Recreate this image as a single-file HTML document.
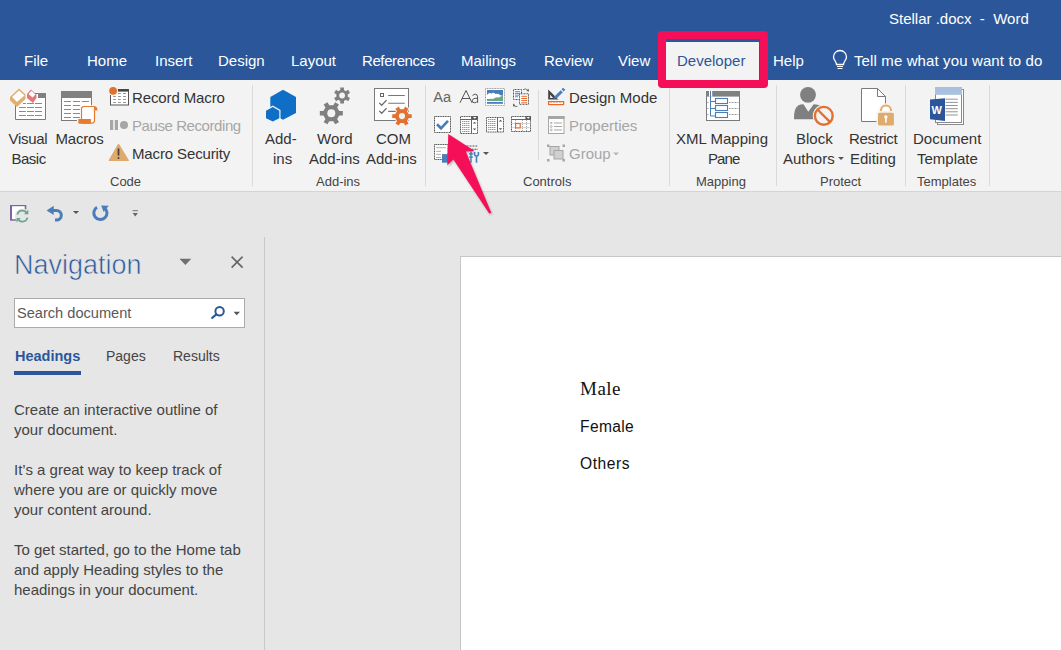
<!DOCTYPE html>
<html><head><meta charset="utf-8">
<style>
*{margin:0;padding:0;box-sizing:border-box}
html,body{width:1061px;height:650px;overflow:hidden;background:#e6e6e6;font-family:"Liberation Sans",sans-serif;position:relative}
.a{position:absolute;white-space:nowrap}
svg.a{overflow:visible}
#title{left:0;top:0;width:1061px;height:80px;background:#2b579a}
.tab{color:#fff;font-size:15px;top:52px}
#ribbon{left:0;top:80px;width:1061px;height:112px;background:#f3f3f3;border-bottom:1px solid #d4d4d4}
.rt{color:#333;font-size:15px}
.gl{color:#444;font-size:13px;top:174px}
.sep{width:1px;background:#dadada;top:85px;height:101px}
.dis{color:#a6a6a6}
#nav{left:0;top:237px;width:265px;height:413px;border-right:1px solid #c8c8c8}
.nt{color:#444;font-size:15px}
#page{left:460px;top:256px;width:601px;height:394px;background:#fff;border-left:1px solid #c6c6c6;border-top:1px solid #c6c6c6}
</style></head><body>
<div id="title" class="a"></div>
<div class="a" style="left:889px;top:10px;color:#fff;font-size:15px">Stellar .docx&nbsp; - &nbsp;Word</div>
<div class="a tab" style="left:24px">File</div>
<div class="a tab" style="left:87px">Home</div>
<div class="a tab" style="left:155px">Insert</div>
<div class="a tab" style="left:218px">Design</div>
<div class="a tab" style="left:291px">Layout</div>
<div class="a tab" style="left:362px;letter-spacing:-0.4px">References</div>
<div class="a tab" style="left:461px">Mailings</div>
<div class="a tab" style="left:544px">Review</div>
<div class="a tab" style="left:618px">View</div>
<div class="a" style="left:666px;top:42px;width:93px;height:39px;background:#f3f3f3"></div>
<div class="a tab" style="left:677px;color:#2b579a">Developer</div>
<div class="a tab" style="left:773px">Help</div>
<svg class="a" style="left:832px;top:51px" width="16" height="20" viewBox="0 0 16 20"><path d="M4.5 13.5 C4.5 10.5 1.5 9 1.5 6 A6.5 6.5 0 0 1 14.5 6 C14.5 9 11.5 10.5 11.5 13.5 Z" fill="none" stroke="#fff" stroke-width="1.3"/><path d="M5 15.5H11M5.5 17.5H10.5" stroke="#fff" stroke-width="1.2"/></svg>
<div class="a tab" style="left:854px;letter-spacing:0.12px">Tell me what you want to do</div>

<div id="ribbon" class="a"></div>
<!-- ===== Code group ===== -->
<svg class="a" style="left:0;top:80px" width="250" height="95" viewBox="0 80 250 95">
  <!-- Visual Basic -->
  <path d="M15.5 99 V119.5 H45.5 V93.5 H28" fill="#fff" stroke="#7a7a7a"/>
  <rect x="38" y="93" width="8" height="5" fill="#808080"/>
  <g stroke="#8a8a8a" stroke-width="1.1">
    <path d="M23 103.5H25.9M27 103.5H34M35 103.5H42M19 107.5H25.9M27 107.5H34M35 107.5H42M19 111.5H25.9M27 111.5H34M35 111.5H42M19 115.5H25.9M27 115.5H34M35 115.5H42"/>
  </g>
  <path d="M10 97 L19 88.5 L25.5 94.5 L25.5 99 L17 107 L10 100.5Z" fill="#e3ad6b"/>
  <path d="M12 97 L19 90.5 L24.5 95.5 L17 102Z" fill="#fff"/>
  <path d="M27 94 L31 89.5 L36.5 94.5 L36.5 98 L33 103 L27 98Z" fill="#e0787d"/>
  <path d="M28.5 94 L31.5 90.8 L35.5 94.5 L32.5 97.5Z" fill="#fff"/>
  <!-- Macros -->
  <rect x="61.5" y="91.5" width="30" height="29" fill="#fff" stroke="#7a7a7a"/>
  <rect x="61" y="91" width="31" height="7" fill="#808080"/>
  <g stroke="#8a8a8a" stroke-width="1.1">
    <path d="M63.9 101.5H71M72.9 101.5H80.1M81.8 101.5H89.1M63.9 105.5H71M72.9 105.5H80.1M63.9 109.5H71M72.9 109.5H80.1M63.9 113.5H71M72.9 113.5H80.1M63.9 117.5H71M72.9 117.5H80.1"/>
  </g>
  <path d="M80 105.2 H92.3 V121.3 H77 V118 H80Z" fill="#fff"/>
  <path d="M81.5 119 V108 L83 106.5 H94 Q96.8 106.8 96.8 109.8 H94.5 V121.5 L92.8 123.2 H82" fill="#fff" stroke="#e8792f" stroke-width="1.2"/>
  <path d="M94 106.4 Q97 106.8 97 109.8 H94Z" fill="#e8792f"/>
  <path d="M78.3 119 H90.9 V123.8 H79.5 Q78.3 123.8 78.3 122.5Z" fill="#e8792f"/>
  <!-- Record macro -->
  <rect x="110.5" y="89.5" width="18" height="15.5" fill="#fff" stroke="#555" stroke-width="1"/>
  <rect x="110.2" y="89.2" width="18.4" height="2.4" fill="#444"/>
  <g stroke="#8a8a8a" stroke-width="0.9"><path d="M113.1 96.5H115.9M118 96.5H120.9M123 96.5H126M113.1 99.5H115.9M118 99.5H120.9M123 99.5H126M113.1 102.5H115.9M118 102.5H120.9M123 102.5H126M118 93.5H120.9M123 93.5H126"/></g>
  <circle cx="113.1" cy="90.8" r="5" fill="#f3f3f3"/>
  <circle cx="113.1" cy="90.8" r="3.9" fill="#e3702d"/>
  <!-- Pause -->
  <rect x="110" y="120" width="3.2" height="10" fill="#a6a6a6"/>
  <rect x="114.8" y="120" width="3.2" height="10" fill="#a6a6a6"/>
  <circle cx="124" cy="125" r="4" fill="#a6a6a6"/>
  <!-- Warning -->
  <path d="M118.5 144 L128.5 160.5 L109 160.5Z" fill="#dfa96b" stroke="#dfa96b" stroke-linejoin="round"/>
  <path d="M118.5 148.5V155.5" stroke="#444" stroke-width="1.8"/><circle cx="118.5" cy="158" r="1" fill="#444"/>
</svg>
<div class="a rt" style="left:8.5px;top:130px;letter-spacing:-0.3px">Visual</div>
<div class="a rt" style="left:11.5px;top:150px;letter-spacing:-0.5px">Basic</div>
<div class="a rt" style="left:55.5px;top:130px;letter-spacing:-0.2px">Macros</div>
<div class="a rt" style="left:132px;top:89px;letter-spacing:-0.12px">Record Macro</div>
<div class="a rt dis" style="left:132px;top:117px;letter-spacing:-0.42px">Pause Recording</div>
<div class="a rt" style="left:132px;top:145px;letter-spacing:-0.13px">Macro Security</div>
<div class="a gl" style="left:110px">Code</div>
<div class="a sep" style="left:252px"></div>
<!-- ===== Add-ins ===== -->
<svg class="a" style="left:255px;top:80px" width="170" height="50" viewBox="255 80 170 50">
  <path d="M283 89.8 L296 97.1 L296 112.9 L283 119.7 L270.3 112.9 L270.3 97.1Z" fill="#0f6fc6"/>
  <path d="M272.8 105.5 L280.5 110 L280.5 119 L272.8 123 L264.8 119 L264.8 110Z" fill="#f3f3f3"/>
  <path d="M272.8 106.9 L279.3 110.7 L279.3 118.2 L272.8 121.5 L266 118.2 L266 110.7Z" fill="#0f6fc6"/>
  <!-- gears -->
  <path d="M339.20 111.10 L342.79 111.10 L342.79 115.50 L339.20 115.50 L337.15 119.04 L338.95 122.15 L335.14 124.35 L333.34 121.24 L329.26 121.24 L327.46 124.35 L323.65 122.15 L325.45 119.04 L323.40 115.50 L319.81 115.50 L319.81 111.10 L323.40 111.10 L325.45 107.56 L323.65 104.45 L327.46 102.25 L329.26 105.36 L333.34 105.36 L335.14 102.25 L338.95 104.45 L337.15 107.56 Z" fill="#7f7f7f"/>
  <path d="M343.95 101.00 L343.95 103.59 L340.25 103.59 L340.25 101.00 L338.26 99.85 L336.02 101.15 L334.17 97.94 L336.41 96.65 L336.41 94.35 L334.17 93.06 L336.02 89.85 L338.26 91.15 L340.25 90.00 L340.25 87.41 L343.95 87.41 L343.95 90.00 L345.94 91.15 L348.18 89.85 L350.03 93.06 L347.79 94.35 L347.79 96.65 L350.03 97.94 L348.18 101.15 L345.94 99.85 Z" fill="#7f7f7f"/>
  <circle cx="331.3" cy="113.3" r="4" fill="#f3f3f3"/>
  <circle cx="342.1" cy="95.5" r="2.9" fill="#f3f3f3"/>
  <!-- COM -->
  <rect x="374.5" y="88.5" width="34" height="32" fill="#fff" stroke="#7a7a7a"/>
  <rect x="380.5" y="93.5" width="3" height="3" fill="none" stroke="#666"/>
  <path d="M388.2 95.5H404.8M388.2 103.3H404.8M388.2 111.4H396" stroke="#777" stroke-width="1.1"/>
  <path d="M379.2 102.9 L381.7 105.3 L386.6 100.1M379.2 110.9 L381.7 113.3 L386.6 108.1" fill="none" stroke="#6a6a6a" stroke-width="1.3"/>
  <path d="M408.74 114.20 L411.72 114.20 L411.72 118.00 L408.74 118.00 L407.01 120.98 L408.50 123.56 L405.21 125.46 L403.72 122.88 L400.28 122.88 L398.79 125.46 L395.50 123.56 L396.99 120.98 L395.26 118.00 L392.28 118.00 L392.28 114.20 L395.26 114.20 L396.99 111.22 L395.50 108.64 L398.79 106.74 L400.28 109.32 L403.72 109.32 L405.21 106.74 L408.50 108.64 L407.01 111.22 Z" fill="#e3702d" stroke="#f3f3f3" stroke-width="2" paint-order="stroke"/>
  <circle cx="402" cy="116.1" r="3.1" fill="#f0f0f0"/>
</svg>
<div class="a rt" style="left:265px;top:130px">Add-</div>
<div class="a rt" style="left:273px;top:150px">ins</div>
<div class="a rt" style="left:317px;top:130px">Word</div>
<div class="a rt" style="left:309px;top:150px">Add-ins</div>
<div class="a rt" style="left:376px;top:130px">COM</div>
<div class="a rt" style="left:366px;top:150px">Add-ins</div>
<div class="a gl" style="left:316px">Add-ins</div>
<div class="a sep" style="left:425px"></div>
<!-- ===== Controls ===== -->
<svg class="a" style="left:428px;top:80px" width="145" height="90" viewBox="428 80 145 90">
  <text x="433.3" y="102.2" font-family="Liberation Sans" font-size="15.5" fill="#666" textLength="17.8" lengthAdjust="spacingAndGlyphs">Aa</text>
  <path d="M460 102.8 L466 90.5 L472 102.8 M462 98.5 H470" fill="none" stroke="#444" stroke-width="0.9"/>
  <path d="M472.5 95.5 Q474 94.2 475.3 94.2 Q477.6 94.2 477.6 96.8 V102.8 M477.6 98.3 Q472.3 98 472.3 100.7 Q472.3 102.8 474.6 102.8 Q476.6 102.8 477.6 101" fill="none" stroke="#444" stroke-width="0.9"/>
  <!-- picture -->
  <rect x="485.5" y="88.5" width="19" height="17" fill="#fff" stroke="#999" stroke-dasharray="1 0.6"/>
  <rect x="487" y="90" width="16" height="11" fill="#4a7ebb"/>
  <path d="M487 95 Q489 92 491.5 93.5 Q493.5 92 495.5 94 Q498 93 500 95 Q502 96 503 95.5 V98 Q499 98.5 496 99 Q492 99.5 487 99Z" fill="#fff"/>
  <path d="M487 100 Q490 98 493 99 Q496 96.5 499 97.5 Q501 95.5 503 96 V101 H487Z" fill="#6aa58c"/>
  <rect x="487" y="102" width="16" height="1.8" fill="#4a7ebb"/>
  <!-- building block -->
  <rect x="513.5" y="89.5" width="8" height="10" fill="#fff" stroke="#555" stroke-dasharray="1 0.5"/>
  <path d="M515 91.7H520M515 93.4H520M515 95.1H520M515 96.8H518" stroke="#4a7ebb" stroke-width="0.9"/>
  <rect x="519.5" y="93.8" width="9" height="10.5" fill="#fff" stroke="#555" stroke-dasharray="1 0.5"/>
  <path d="M521.3 96.3H527.1M521.3 98.5H527.1M521.3 100.6H527.1M521.3 102.8H527.1" stroke="#e46c2a" stroke-width="1"/>
  <path d="M523 89.7 Q526 87.8 528.3 90.5M514 105.6 Q515 107 517.5 106.4" fill="none" stroke="#555" stroke-width="0.8"/>
  <path d="M528.8 88.8 L528.8 91.5 L526.5 91Z M513.2 103.5 L513 106.5 L515.5 105.5Z" fill="#555"/>
  <!-- checkbox -->
  <rect x="434.5" y="116.5" width="16" height="16" fill="#fff" stroke="#555" stroke-dasharray="1.2 0.5"/>
  <path d="M437 124.3 L441 128.3 L448 120.8" fill="none" stroke="#4a7ebb" stroke-width="2.7"/>
  <!-- combo -->
  <rect x="460.5" y="116.5" width="17" height="17" fill="#fff" stroke="#555" stroke-dasharray="1.2 0.5"/>
  <path d="M460.5 119.5H477.5M471.5 117V133.5" stroke="#666" stroke-width="1"/>
  <rect x="471.6" y="116.2" width="6.4" height="3.2" fill="#555"/>
  <path d="M473 117 L476.6 117 L474.8 118.8Z" fill="#fff"/>
  <path d="M462 121.5H470M462 123.5H470M462 125.5H470M462 127.5H470M462 129.5H470M462 131.5H470" stroke="#999" stroke-width="1" stroke-dasharray="1.5 0.5"/>
  <path d="M472.8 123.5 L476.3 123.5 L474.55 121.7Z M472.8 128.5 L476.3 128.5 L474.55 130.3Z" fill="#555"/>
  <!-- list -->
  <rect x="486.5" y="117.5" width="17" height="14.5" fill="#fff" stroke="#555" stroke-dasharray="1.2 0.5"/>
  <path d="M497.5 118V132" stroke="#666"/>
  <path d="M488 119.5H496M488 121.5H496M488 123.5H496M488 125.5H496M488 127.5H496M488 129.5H496" stroke="#999" stroke-width="1" stroke-dasharray="1.5 0.5"/>
  <path d="M498.7 121.5 L502.3 121.5 L500.5 119.7Z M498.7 128.3 L502.3 128.3 L500.5 130.1Z" fill="#555"/>
  <!-- date -->
  <rect x="511.5" y="116.5" width="19" height="15" fill="#fff" stroke="#555" stroke-dasharray="1.2 0.5"/>
  <path d="M511.5 119.5H531" stroke="#666" stroke-width="1"/>
  <path d="M511.5 123.5H530.5M511.5 127.5H530.5M515.5 120V131.5M522.5 120V131.5M526.5 120V131.5" stroke="#aaa" stroke-width="1" stroke-dasharray="1 1"/>
  <rect x="525.4" y="116.2" width="5.6" height="3.2" fill="#555"/>
  <path d="M526.5 117 L530 117 L528.25 118.8Z" fill="#fff"/>
  <rect x="515.6" y="123.5" width="4.6" height="4.4" fill="#fff" stroke="#e46c2a" stroke-width="1.2"/>
  <!-- legacy tools -->
  <rect x="434.5" y="144.5" width="13.5" height="15" fill="#fff" stroke="#555" stroke-dasharray="1.2 0.5"/>
  <path d="M436.1 147.7H446M436.1 151.3H441M436.1 154.4H441M436.1 157.5H441" stroke="#999" stroke-width="0.8"/>
  <rect x="442" y="154.1" width="6.4" height="8.6" fill="#4a7ebb"/>
  <path d="M465.5 146H477.8M466 149.3H478" stroke="#555" stroke-width="1.1" stroke-dasharray="1 0.5"/>
  <path d="M471 151.5V162.7M469.2 154H472.9M469.2 157H472.9" stroke="#4a7ebb" stroke-width="1.4"/>
  <path d="M476.5 155.5V162.7M474.6 152 V154.3 Q474.6 156 476.5 156 Q478.4 156 478.4 154.3 V152" fill="none" stroke="#4a7ebb" stroke-width="1.6"/>
  <path d="M483 152 L489 152 L486 155Z" fill="#555"/>
  <!-- Design mode -->
  <path d="M548.2 89.4 V99.5 H558.5Z" fill="#444"/>
  <path d="M550.1 94.5 V97.9 H553.1Z" fill="#f3f3f3"/>
  <path d="M556 97.2 L563 90.2" stroke="#f3f3f3" stroke-width="4.5"/>
  <path d="M555.5 97.5 L561.8 91.2" stroke="#4a7ebb" stroke-width="3"/>
  <path d="M562.6 90.4 L564.2 88.8" stroke="#4a7ebb" stroke-width="3"/>
  <path d="M553.8 98.8 L554.6 96.2 L556.4 98Z" fill="#4a7ebb"/>
  <rect x="548.6" y="101.6" width="15" height="3" fill="#fff" stroke="#e46c2a" stroke-width="1.2"/>
  <path d="M551 102V102.8M554 102V102.8M557 102V102.8M560 102V102.8" stroke="#e46c2a" stroke-width="0.8"/>
  <path d="M538.5 90V160" stroke="#dadada"/>
  <!-- Properties -->
  <rect x="548.5" y="116.5" width="15.5" height="17" fill="#fff" stroke="#a6a6a6"/>
  <rect x="548" y="116" width="16.5" height="3" fill="#a6a6a6"/>
  <path d="M554 123H562M554 126.5H562M554 130H562" stroke="#a6a6a6" stroke-width="1.1"/>
  <circle cx="551.2" cy="126.5" r="1" fill="none" stroke="#a6a6a6" stroke-width="0.8"/><circle cx="551.2" cy="130" r="1" fill="none" stroke="#a6a6a6" stroke-width="0.8"/>
  <path d="M550 123H552.5M551.2 121.8V124.2" stroke="#a6a6a6" stroke-width="0.8"/>
  <!-- Group -->
  <rect x="550" y="146.5" width="9" height="8.5" fill="#d0d0d0" stroke="#a6a6a6"/>
  <rect x="554" y="150.5" width="9" height="8.5" fill="#d0d0d0" stroke="#a6a6a6"/>
  <rect x="547" y="144.5" width="2.5" height="2.5" fill="#a6a6a6"/><rect x="562.5" y="144.5" width="2.5" height="2.5" fill="#a6a6a6"/>
  <rect x="547" y="159" width="2.5" height="2.5" fill="#a6a6a6"/><rect x="562.5" y="159" width="2.5" height="2.5" fill="#a6a6a6"/>
  <path d="M613 152.5 L619 152.5 L616 155.5Z" fill="#b5b5b5"/>
</svg>
<div class="a rt" style="left:569px;top:89px">Design Mode</div>
<div class="a rt dis" style="left:569px;top:117px">Properties</div>
<div class="a rt dis" style="left:569px;top:145px">Group</div>
<div class="a gl" style="left:523px">Controls</div>
<div class="a sep" style="left:669px"></div>
<!-- ===== Mapping ===== -->
<svg class="a" style="left:700px;top:85px" width="50" height="40" viewBox="700 85 50 40">
  <rect x="706.5" y="91.5" width="33" height="29" fill="#fff" stroke="#7a7a7a"/>
  <rect x="706" y="91" width="34" height="5.6" fill="#808080"/>
  <rect x="709" y="91" width="3.2" height="5.6" fill="#fff"/>
  <path d="M710.5 91V116H715.5M710.5 101.5H715.5M710.5 108.5H715.5" fill="none" stroke="#4a7ebb" stroke-width="1"/>
  <rect x="715.5" y="98.5" width="12" height="5" fill="#fff" stroke="#4a7ebb" stroke-width="1.1"/>
  <rect x="715.5" y="105.5" width="12" height="5" fill="#fff" stroke="#4a7ebb" stroke-width="1.1"/>
  <rect x="715.5" y="112.5" width="12" height="5" fill="#fff" stroke="#4a7ebb" stroke-width="1.1"/>
  <path d="M729 102.5H738.5M729 108.5H738.5M729 114.5H738.5M706.8 102.5H708.8M706.8 108.5H708.8M706.8 114.5H708.8" stroke="#999" stroke-dasharray="1 0.5" stroke-width="1"/>
</svg>
<div class="a rt" style="left:676px;top:130px">XML Mapping</div>
<div class="a rt" style="left:708px;top:150px;letter-spacing:-0.9px">Pane</div>
<div class="a gl" style="left:696px">Mapping</div>
<div class="a sep" style="left:776px"></div>
<!-- ===== Protect ===== -->
<svg class="a" style="left:785px;top:84px" width="120" height="45" viewBox="785 84 120 45">
  <circle cx="808" cy="94.8" r="7.9" fill="#808080"/>
  <path d="M794 119.2 Q793.6 108 798.5 105.3 Q800.5 104.3 803.5 104.3 L808.3 111.7 L813.7 104.3 Q818 104.3 821 106 L822 119.2Z" fill="#808080"/>
  <circle cx="823.8" cy="115.8" r="11" fill="#f3f3f3"/>
  <circle cx="823.8" cy="115.8" r="8.9" fill="#f3f3f3" stroke="#e3702d" stroke-width="2.4"/>
  <path d="M817.5 109.5 L830.1 122.1" stroke="#e3702d" stroke-width="2.4"/>
  <!-- Restrict -->
  <path d="M885.5 104 V96.5 L877.5 88.5 H861.5 V121.5 H877" fill="#fff" stroke="#7a7a7a"/>
  <path d="M877.5 88.5 V96.5 H885.5" fill="none" stroke="#7a7a7a"/>
  <path d="M881 113 V110.5 A5 5 0 0 1 891 110.5 V113" fill="#fff" stroke="#f3f3f3" stroke-width="4.5"/>
  <path d="M881 113 V110.5 A5 5 0 0 1 891 110.5 V113" fill="#fff" stroke="#e0ac6e" stroke-width="2"/>
  <rect x="876.5" y="111" width="19" height="16" rx="2" fill="#f3f3f3"/>
  <rect x="878" y="112.8" width="15.9" height="12.8" rx="1.5" fill="#e0ac6e"/>
  <circle cx="885.9" cy="117" r="1.7" fill="#fff"/><rect x="885.1" y="117" width="1.6" height="5.6" fill="#fff"/>
</svg>
<div class="a rt" style="left:796px;top:130px">Block</div>
<div class="a rt" style="left:783px;top:150px">Authors</div>
<svg class="a" style="left:837px;top:156px" width="8" height="5"><path d="M1 1H7L4 4Z" fill="#555"/></svg>
<div class="a rt" style="left:849px;top:130px;letter-spacing:-0.3px">Restrict</div>
<div class="a rt" style="left:850px;top:150px">Editing</div>
<div class="a gl" style="left:820px">Protect</div>
<div class="a sep" style="left:905px"></div>
<!-- ===== Templates ===== -->
<svg class="a" style="left:925px;top:84px" width="45" height="45" viewBox="925 84 45 45">
  <rect x="937.5" y="89.5" width="26" height="35" fill="#fff" stroke="#8a8a8a"/>
  <rect x="935.5" y="87.5" width="26" height="35" fill="#fff" stroke="#8a8a8a"/>
  <rect x="935" y="87" width="27" height="7.8" fill="#a9c0de"/>
  <path d="M945.5 99.2H957.8M945.5 102.4H957.8M945.5 105.5H957.8M945.5 108.7H957.8M945.5 111.8H957.8M945.5 115H957.8" stroke="#888" stroke-width="0.9"/>
  <path d="M930 99.6 L945 98.2 V120.9 L930 119.3Z" fill="#2b579a"/>
  <text x="931.5" y="114" font-family="Liberation Sans" font-weight="bold" font-size="11" fill="#fff">W</text>
</svg>
<div class="a rt" style="left:913px;top:130px">Document</div>
<div class="a rt" style="left:917px;top:150px">Template</div>
<div class="a gl" style="left:917px">Templates</div>
<div class="a sep" style="left:989px"></div>

<!-- QAT -->
<svg class="a" style="left:0;top:195px" width="150" height="35" viewBox="0 195 150 35">
  <rect x="10" y="205" width="16.3" height="15.7" fill="#8064a2"/>
  <rect x="12" y="206.2" width="12.7" height="13" fill="#fff"/>
  <circle cx="22.4" cy="216.1" r="7.5" fill="#e6e6e6"/>
  <path d="M17.3 214.6 A5.3 5.3 0 0 1 26.6 212.6M27.5 217.6 A5.3 5.3 0 0 1 18.2 219.6" fill="none" stroke="#6aa58c" stroke-width="1.7"/>
  <path d="M28.3 209.8 V214.2 H24Z M16.5 222.4 V218 H20.8Z" fill="#6aa58c"/>
  <path d="M51 210.4 H56.5 A4.8 4.8 0 0 1 56.5 220 H55" fill="none" stroke="#4a7ebb" stroke-width="3"/>
  <path d="M46.6 210.4 L53.7 205.8 V215Z" fill="#4a7ebb"/>
  <path d="M72.9 210.9 H79.1 L76 214.1Z" fill="#555"/>
  <path d="M97 207.3 A6.6 6.6 0 1 0 104.5 207.8" fill="none" stroke="#4a7ebb" stroke-width="3"/>
  <path d="M101.2 205.5 L108.8 205.8 L103.6 212Z" fill="#4a7ebb"/>
  <path d="M132.6 210.7H137.9" stroke="#666" stroke-width="0.9"/>
  <path d="M132.6 213 H137.9 L135.25 216.6Z" fill="#666"/>
</svg>
<!-- Nav pane -->
<div id="nav" class="a"></div>
<div class="a" style="left:14px;top:250px;color:#2b579a;font-size:27px;-webkit-text-stroke:0.6px #e6e6e6">Navigation</div>
<svg class="a" style="left:179px;top:258px" width="13" height="8"><path d="M0.5 0.8H12.3L6.4 7Z" fill="#707070"/></svg>
<svg class="a" style="left:230px;top:255px" width="14" height="14"><path d="M1.6 1.6L12.6 12.6M12.6 1.6L1.6 12.6" stroke="#666" stroke-width="1.6"/></svg>
<div class="a" style="left:14px;top:298px;width:231px;height:30px;background:#fff;border:1px solid #ababab"></div>
<div class="a" style="left:17px;top:305px;color:#595959;font-size:14.6px">Search document</div>
<svg class="a" style="left:210px;top:305px" width="16" height="16"><circle cx="9.6" cy="6.2" r="4.2" fill="none" stroke="#2b579a" stroke-width="2"/><path d="M6.6 9.2L1.5 13.5" stroke="#2b579a" stroke-width="2.2"/></svg>
<svg class="a" style="left:233px;top:311px" width="8" height="5"><path d="M0.5 0.8H7L3.75 4.2Z" fill="#555"/></svg>
<div class="a" style="left:15px;top:348px;color:#2b579a;font-size:14.5px;font-weight:bold">Headings</div>
<div class="a" style="left:14px;top:371px;width:67px;height:3.5px;background:#2b579a"></div>
<div class="a nt" style="left:106px;top:348px;font-size:14px">Pages</div>
<div class="a nt" style="left:173px;top:348px;font-size:14px">Results</div>
<div class="a nt" style="left:14px;top:400px;line-height:20px">Create an interactive outline of<br>your document.<br><br>It’s a great way to keep track of<br>where you are or quickly move<br>your content around.<br><br>To get started, go to the Home tab<br>and apply Heading styles to the<br>headings in your document.</div>

<div id="page" class="a"></div>
<div class="a" style="left:580px;top:378px;font-family:'Liberation Serif',serif;font-size:19px;color:#111;letter-spacing:0.5px">Male</div>
<div class="a" style="left:580px;top:418px;font-size:15.6px;color:#111;letter-spacing:0.35px">Female</div>
<div class="a" style="left:580px;top:455px;font-size:15.6px;color:#111;letter-spacing:0.55px">Others</div>

<!-- pink highlight box -->
<div class="a" style="left:658px;top:31px;width:110px;height:57px;border:8px solid #f50f58;border-radius:4px"></div>
<!-- arrow -->
<svg class="a" style="left:430px;top:125px" width="70" height="95" viewBox="430 125 70 95">
  <defs><filter id="sh" x="-20%" y="-20%" width="140%" height="140%"><feGaussianBlur stdDeviation="1.2"/></filter></defs>
  <path d="M448.3 134.1 L474.6 151 L465.8 151.5 L491.3 212.7 L489.2 213.4 L453.4 159.4 L447.3 165.2Z" fill="#000" opacity="0.25" filter="url(#sh)" transform="translate(1 1.5)"/>
  <path d="M448.3 134.1 L474.6 151 L465.8 151.5 L491.3 212.7 L489.2 213.4 L453.4 159.4 L447.3 165.2Z" fill="#f50f58"/>
</svg>
</body></html>
